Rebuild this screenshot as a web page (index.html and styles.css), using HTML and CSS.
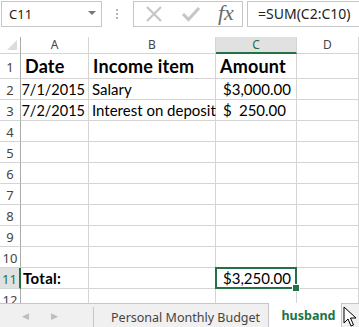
FILE: index.html
```html
<!DOCTYPE html>
<html>
<head>
<meta charset="utf-8">
<link rel="stylesheet" href="styles.css">
</head>
<body>
<div class="app">
  <div class="toolbar">
    <div class="namebox"><span>C11</span><span class="caret"></span></div>
    <div class="dots"><i></i><i></i><i></i></div>
    <div class="fxbox">
      <svg class="ico" width="20" height="20" viewBox="0 0 20 20"><path d="M3 3 L17 17 M17 3 L3 17" stroke="#c6c6c6" stroke-width="2.2" fill="none"/></svg>
      <svg class="ico" width="20" height="20" viewBox="0 0 20 20"><path d="M2 10 L7.5 15.5 L18 4" stroke="#c6c6c6" stroke-width="3" fill="none"/></svg>
      <span class="fx">fx</span>
    </div>
    <div class="formula">=SUM(C2:C10)</div>
  </div>

  <div class="grid">
    <div class="corner"><span class="tri"></span></div>
    <div class="ch">A</div>
    <div class="ch">B</div>
    <div class="ch sel">C</div>
    <div class="ch">D</div>

    <div class="rh r1">1</div>
    <div class="c r1 b">Date</div>
    <div class="c r1 b">Income item</div>
    <div class="c r1 b">Amount</div>
    <div class="c r1"></div>

    <div class="rh">2</div>
    <div class="c right">7/1/2015</div>
    <div class="c">Salary</div>
    <div class="c acc"><span>$</span><span>3,000.00</span></div>
    <div class="c"></div>

    <div class="rh">3</div>
    <div class="c right">7/2/2015</div>
    <div class="c">Interest on deposit</div>
    <div class="c acc"><span>$</span><span>250.00</span></div>
    <div class="c"></div>

    <div class="rh">4</div><div class="c"></div><div class="c"></div><div class="c"></div><div class="c"></div>
    <div class="rh">5</div><div class="c"></div><div class="c"></div><div class="c"></div><div class="c"></div>
    <div class="rh">6</div><div class="c"></div><div class="c"></div><div class="c"></div><div class="c"></div>
    <div class="rh">7</div><div class="c"></div><div class="c"></div><div class="c"></div><div class="c"></div>
    <div class="rh">8</div><div class="c"></div><div class="c"></div><div class="c"></div><div class="c"></div>
    <div class="rh">9</div><div class="c"></div><div class="c"></div><div class="c"></div><div class="c"></div>
    <div class="rh">10</div><div class="c"></div><div class="c"></div><div class="c"></div><div class="c"></div>

    <div class="rh sel">11</div>
    <div class="c b tot">Total:</div>
    <div class="c"></div>
    <div class="c acc active"><span>$</span><span>3,250.00</span><i class="handle"></i></div>
    <div class="c"></div>

    <div class="rh">12</div><div class="c"></div><div class="c"></div><div class="c"></div><div class="c"></div>
  </div>

  <div class="tabbar">
    <div class="nav"><span class="arr">&#9664;</span><span class="arr">&#9654;</span></div>
    <div class="tab">Personal Monthly Budget</div>
    <div class="tab cur">husband</div>
    <div class="tab stub"></div>
    <svg class="cursor" width="14" height="22" viewBox="0 0 14 22"><path d="M1 1 L1 17 L5 13 L8 20 L10.5 19 L7.5 12 L13 12 Z" fill="#fff" stroke="#000" stroke-width="1"/></svg>
  </div>
</div>
</body>
</html>
```

FILE: styles.css
```css
* { box-sizing: border-box; }
html, body { margin: 0; padding: 0; background: #fff; }
.app {
  width: 359px; height: 327px; overflow: hidden; position: relative;
  font-family: "Noto Sans", "Open Sans", sans-serif;
}
.toolbar {
  height: 37px; display: flex; align-items: flex-start; padding-top: 1px;
}
.namebox {
  margin-left: 1px; width: 101px; height: 26px; border: 1px solid #c6c6c6;
  display: flex; align-items: center; justify-content: space-between;
  padding: 0 5px 0 7px; font-size: 13px; color: #222;
}
.caret {
  width: 0; height: 0; border-left: 4px solid transparent; border-right: 4px solid transparent;
  border-top: 4px solid #777; margin-top: -2px;
}
.dots {
  width: 31px; height: 26px; display: flex; flex-direction: column; align-items: center;
  justify-content: center; gap: 2px;
}
.dots i { display: block; width: 2px; height: 2px; background: #b5b5b5; margin-left: -1px; }
.fxbox {
  width: 110px; height: 26px; border: 1px solid #c6c6c6; display: flex; align-items: center;
  padding-left: 10px; gap: 17px;
}
.fx {
  font-family: "Liberation Serif", "DejaVu Serif", serif; font-style: italic; font-size: 22px;
  color: #6a6a6a; line-height: 1; margin-top: -3px;
}
.formula {
  margin-left: 4px; flex: 1; height: 26px; border: 1px solid #c6c6c6; border-right: none;
  font-size: 14px; color: #222; padding-left: 10px; line-height: 23px;
}
.grid {
  display: grid;
  grid-template-columns: 21px 68px 127px 81px 62px;
  grid-template-rows: 17px 25px repeat(11, 21px);
  height: 266px; overflow: hidden;
}
.corner { border-bottom: 1px solid #d4d4d4; border-right: 1px solid #ababab; position: relative; }
.tri {
  position: absolute; right: 3px; bottom: 3px; width: 0; height: 0;
  border-left: 10px solid transparent; border-bottom: 10px solid #dcdcdc;
}
.ch {
  border-right: 1px solid #d4d4d4; border-bottom: 1px solid #d4d4d4;
  font-size: 12px; color: #444; text-align: center; line-height: 16px;
}
.ch.sel { background: #e1e1e1; border-bottom: 2px solid #217346; color: #217346; }
.rh {
  border-right: 1px solid #ababab; border-bottom: 1px solid #d4d4d4;
  font-size: 13px; color: #444; display: flex; align-items: center; justify-content: center;
  padding-top: 1px;
}
.rh.sel { background: #e1e1e1; color: #217346; border-right: 2px solid #217346; }
.c {
  border-right: 1px solid #d4d4d4; border-bottom: 1px solid #d4d4d4;
  font-family: "Lato", "Liberation Sans", sans-serif; font-size: 15px; color: #000;
  display: flex; align-items: flex-end; padding: 0 3px 1px 3px; white-space: nowrap;
  position: relative;
}
.c.b { font-weight: bold; font-size: 18px; padding-left: 4px; letter-spacing: 0.2px; }
.c.tot { font-size: 15px; padding-left: 2px; letter-spacing: 0.3px; }
.c.right { justify-content: flex-end; padding-right: 3px; font-size: 14.5px; }
.c.acc { justify-content: space-between; padding: 0 10px 1px 7px; }
.active::after {
  content: ""; position: absolute; left: -1px; top: -1px; right: -1px; bottom: -1px;
  border: 2px solid #217346;
}
.handle {
  position: absolute; right: -4px; bottom: -4px; width: 6px; height: 6px; background: #217346;
  border: 1px solid #fff; z-index: 2; box-sizing: content-box;
}
.tabbar {
  height: 24px; border-top: 1px solid #c6c6c6; background: #f0f0f0; display: flex;
  position: relative;
}
.nav { width: 96px; display: flex; align-items: center; padding-left: 22px; gap: 22px; }
.arr { font-size: 9px; color: #bdbdbd; }
.tab {
  border-left: 1px solid #c6c6c6; padding: 0 0 0 17px; font-size: 12.5px; color: #444;
  display: flex; align-items: center; margin-top: 3px; width: 182px;
}
.tab.cur {
  background: #fff; color: #217346; font-weight: bold; width: 76px; padding-left: 12px;
  margin-top: -1px; border-right: 1px solid #c6c6c6;
}
.tab.stub { width: 6px; border-left: none; }
.cursor { position: absolute; left: 343px; top: 2px; }
```
